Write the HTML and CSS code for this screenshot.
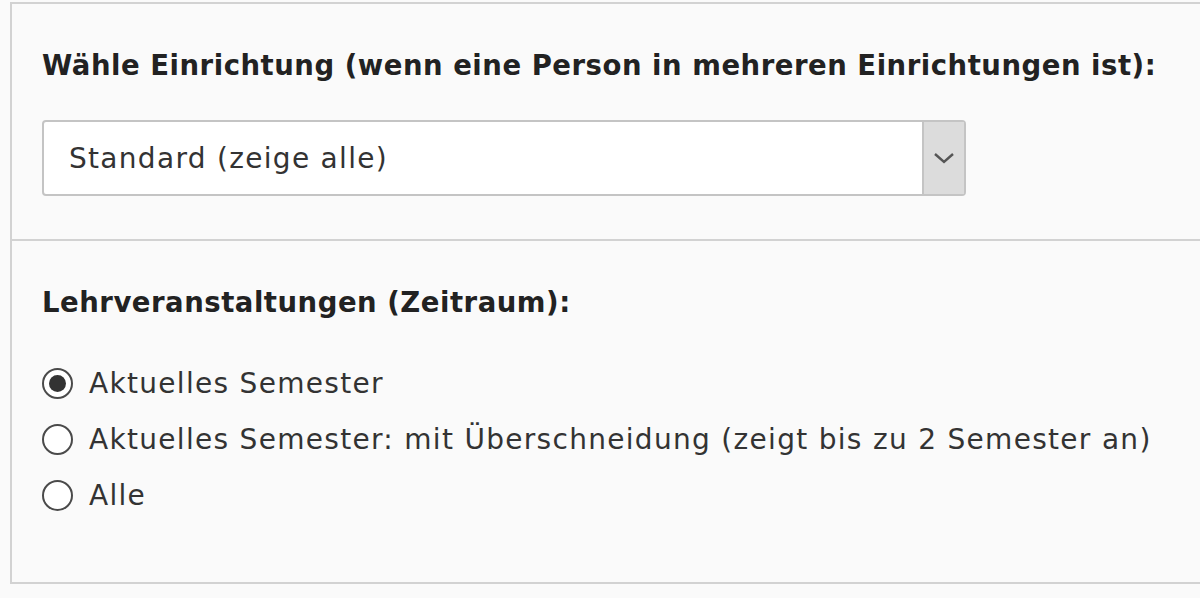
FILE: index.html
```html
<!DOCTYPE html>
<html lang="de">
<head>
<meta charset="utf-8">
<link rel="stylesheet" href="styles.css">
</head>
<body>
<div class="panel">
  <div class="section section-first">
    <label class="title">Wähle Einrichtung (wenn eine Person in mehreren Einrichtungen ist):</label>
    <div class="select">
      <span class="select-value">Standard (zeige alle)</span>
      <span class="select-btn">
        <svg width="22" height="12" viewBox="0 0 22 12"><path d="M2 2 L11 10 L20 2" fill="none" stroke="#555" stroke-width="2.4"/></svg>
      </span>
    </div>
  </div>
  <div class="section section-second">
    <label class="title">Lehrveranstaltungen (Zeitraum):</label>
    <div class="radios">
      <label class="radio"><input type="radio" name="z" checked><span>Aktuelles Semester</span></label>
      <label class="radio"><input type="radio" name="z"><span>Aktuelles Semester: mit Überschneidung (zeigt bis zu 2 Semester an)</span></label>
      <label class="radio"><input type="radio" name="z"><span>Alle</span></label>
    </div>
  </div>
</div>
</body>
</html>
```

FILE: styles.css
```css
html, body {
  margin: 0;
  padding: 0;
  background: #fafafa;
}
body {
  padding: 2px 0 0 10px;
  font-family: "DejaVu Sans", Verdana, sans-serif;
  font-size: 28px;
  letter-spacing: 1.3px;
  color: #333;
  overflow: hidden;
}
.panel {
  border: 2px solid #d2d2d2;
  border-right: none;
  background: #fafafa;
  width: 1400px;
}
.section {
  padding-left: 30px;
}
.section-first {
  height: 237px;
  padding-top: 43px;
  box-sizing: border-box;
  border-bottom: 2px solid #d2d2d2;
}
.section-second {
  height: 341px;
  box-sizing: border-box;
  padding-top: 43px;
}
.title {
  display: block;
  font-size: 27.5px;
  font-weight: bold;
  letter-spacing: 0.52px;
  line-height: 36px;
  color: #222;
}
.select {
  margin-top: 37px;
  width: 924px;
  height: 76px;
  box-sizing: border-box;
  border: 2px solid #c4c4c4;
  border-radius: 4px;
  background: #fff;
  display: flex;
  align-items: stretch;
}
.select-value {
  flex: 1;
  display: flex;
  align-items: center;
  padding-left: 25px;
}
.select-btn {
  width: 40px;
  background: #dcdcdc;
  border-left: 2px solid #c4c4c4;
  display: flex;
  align-items: center;
  justify-content: center;
}
.radios {
  margin-top: 35px;
  display: flex;
  flex-direction: column;
}
.radio {
  display: flex;
  align-items: center;
  height: 56px;
}
.radio input {
  appearance: none;
  -webkit-appearance: none;
  margin: 0 16px 0 0;
  width: 31px;
  height: 31px;
  border: 2.5px solid #4a4a4a;
  border-radius: 50%;
  background: #fff;
  box-sizing: border-box;
  display: flex;
  align-items: center;
  justify-content: center;
}
.radio input:checked::after {
  content: "";
  width: 17px;
  height: 17px;
  border-radius: 50%;
  background: #333;
}
```
